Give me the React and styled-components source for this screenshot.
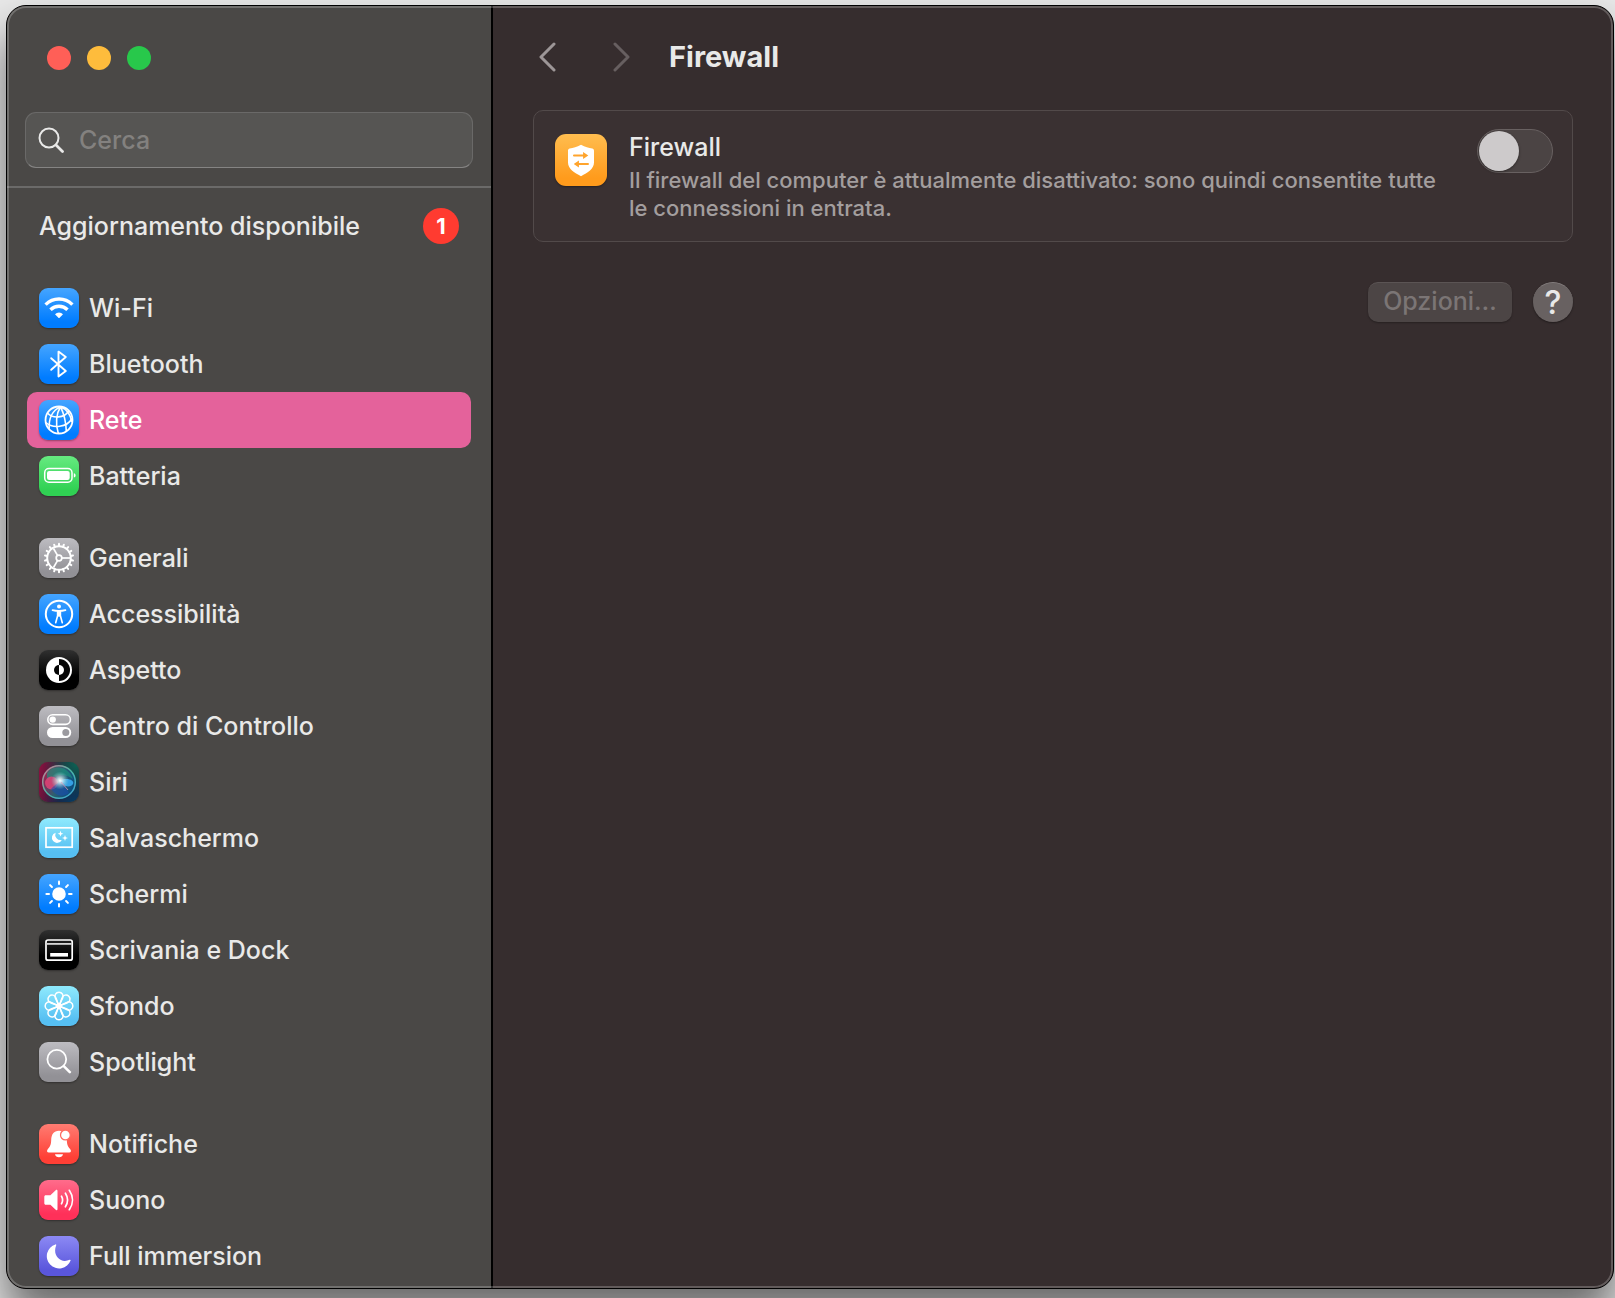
import React from "react";
import styled, { createGlobalStyle } from "styled-components";

const GlobalStyle = createGlobalStyle`
  *, *::before, *::after { box-sizing: border-box; }
  body {
    margin: 0;
    background: #e8e8e8;
    color: #e9e9e8;
    font-family: Inter, "Open Sans", sans-serif;
    font-size: 25px;
    font-weight: 500;
  }
  ul { list-style: none; margin: 0; padding: 0; }
  h1, h2, p { margin: 0; }
  button, input { font: inherit; color: inherit; }
  svg { display: block; flex: none; }
`;

const Desktop = styled.div`
  display: flex;
  min-height: 100vh;
  padding: 5px 1px 9px 6px;
  overflow: hidden;
`;

const Window = styled.div`
  position: relative;
  display: flex;
  flex: 1;
  min-width: 0;
  border: 1px solid #000;
  border-radius: 20px;
  overflow: hidden;
  background: #362d2e;
  box-shadow: 0 28px 44px rgba(0, 0, 0, 0.55);

  &::after {
    content: "";
    position: absolute;
    inset: 0;
    border-radius: 19px;
    box-shadow: inset 0 0 0 2px rgba(255, 255, 255, 0.22);
    pointer-events: none;
  }
`;

const Sidebar = styled.aside`
  flex: none;
  width: 486px;
  border-right: 2px solid #000;
  background: #4a4846;
`;

const SidebarHeader = styled.div`
  display: flex;
  flex-direction: column;
  gap: 42px;
  padding: 40px 18px 18px;
  border-bottom: 2px solid #6b6a69;
`;

const TrafficLights = styled.div`
  display: flex;
  gap: 16px;
  padding-left: 22px;
`;

const Light = styled.button`
  width: 24px;
  height: 24px;
  padding: 0;
  border: 0;
  border-radius: 50%;
  background: ${(p) => p.$color};
`;

const SearchField = styled.label`
  display: flex;
  align-items: center;
  gap: 15px;
  height: 56px;
  padding: 0 12px;
  border: 1px solid #6a6968;
  border-bottom-color: #858483;
  border-radius: 11px;
  background: #565553;
`;

const SearchInput = styled.input`
  flex: 1;
  min-width: 0;
  padding: 0;
  border: 0;
  outline: 0;
  background: transparent;
  &::placeholder { color: #83817f; opacity: 1; }
`;

const Nav = styled.nav`
  display: flex;
  flex-direction: column;
  gap: 26px;
  padding: 10px 20px 3px;
`;

const RowLink = styled.a`
  display: flex;
  align-items: center;
  gap: 10px;
  height: 56px;
  padding: 0 12px;
  border-radius: 10px;
  color: ${(p) => (p.$selected ? "#fff" : "inherit")};
  background: ${(p) => (p.$selected ? "#e4629b" : "transparent")};
  text-decoration: none;
  white-space: nowrap;
`;

const Badge = styled.span`
  display: grid;
  place-items: center;
  width: 36px;
  height: 36px;
  margin-left: auto;
  border-radius: 50%;
  background: #ff3b30;
  color: #fff;
  font-size: 22px;
  font-weight: 700;
`;

const fills = {
  blue: "linear-gradient(#45a5ff, #007cff 85%)",
  green: "linear-gradient(#66ea80, #30d153 85%)",
  gray: "linear-gradient(#bdbcc1, #929196 85%)",
  black: "linear-gradient(#303030, #000 65%)",
  cyan: "linear-gradient(#8feafd, #56bff2 85%)",
  red: "linear-gradient(#ff7c72, #ff3f35 85%)",
  pink: "linear-gradient(#ff6c8b, #ff3059 85%)",
  indigo: "linear-gradient(#8c89f4, #5a56dc 85%)",
  orange: "linear-gradient(#ffbd4f, #ff9b1c 85%)",
  siri: "radial-gradient(circle at 95% 5%, #0c6354, transparent 60%), radial-gradient(circle at 90% 100%, #063c62, transparent 60%), linear-gradient(100deg, #8d1240, #251735 60%)",
};

const Tile = styled.span`
  display: grid;
  place-items: center;
  flex: none;
  width: ${(p) => p.$size}px;
  height: ${(p) => p.$size}px;
  border-radius: ${(p) => (p.$size > 40 ? 11 : 9)}px;
  background: ${(p) => fills[p.$fill]};
  box-shadow: 0 1px 2px rgba(0, 0, 0, 0.35);
`;

const Main = styled.main`
  display: flex;
  flex-direction: column;
  flex: 1;
  min-width: 0;
  padding: 30px 40px 40px;
`;

const Toolbar = styled.header`
  display: flex;
  align-items: center;
  height: 42px;
`;

const NavButton = styled.button`
  display: grid;
  place-items: center;
  width: 30px;
  height: 42px;
  margin-right: 43px;
  padding: 0;
  border: 0;
  background: none;
  color: ${(p) => (p.disabled ? "#675f60" : "#9d9697")};

  & + & { margin-right: 33px; }
`;

const PageTitle = styled.h1`
  font-size: 29px;
  font-weight: 700;
  line-height: 42px;
`;

const Card = styled.section`
  display: flex;
  align-items: flex-start;
  gap: 22px;
  margin-top: 32px;
  padding: 18px 19px 18px 21px;
  border: 1px solid #524a4a;
  border-radius: 10px;
  background: #3a3132;
`;

const CardIcon = styled.div`
  padding-top: 5px;
`;

const CardText = styled.div`
  flex: 1;
  min-width: 0;
  padding-bottom: 1px;
`;

const CardTitle = styled.label`
  display: block;
  margin-bottom: 1px;
  line-height: 36px;
`;

const Description = styled.p`
  max-width: 830px;
  color: #a39e9e;
  font-size: 22px;
  line-height: 28px;
`;

const Switch = styled.input`
  appearance: none;
  flex: none;
  width: 76px;
  height: 44px;
  margin: 0;
  padding: 1px;
  border: 1px solid #686161;
  border-radius: 22px;
  background: #4b4444;

  &::before {
    content: "";
    display: block;
    width: 40px;
    height: 40px;
    border-radius: 50%;
    background: #cdcacb;
    box-shadow: 0 1px 3px rgba(0, 0, 0, 0.4);
  }
  &:checked { background: #e4629b; }
  &:checked::before { margin-left: 32px; }
`;

const Actions = styled.div`
  display: flex;
  justify-content: flex-end;
  gap: 21px;
  margin-top: 40px;
`;

const PushButton = styled.button`
  width: 144px;
  height: 40px;
  padding: 0 0 3px;
  border: 0;
  border-top: 1px solid #5b5454;
  border-radius: 10px;
  background: #4c4545;
  color: #7b7575;
  line-height: 36px;
  box-shadow: 0 1px 2px rgba(0, 0, 0, 0.3);
`;

const HelpButton = styled.button`
  width: 40px;
  height: 40px;
  padding: 0;
  border: 0;
  border-top: 1px solid #837d7d;
  border-radius: 50%;
  background: #686161;
  font-size: 32px;
  line-height: 38px;
  box-shadow: 0 1px 2px rgba(0, 0, 0, 0.4);
`;

const turns = (count) => Array.from({ length: count }, (_, i) => (360 / count) * i);

const glyphs = {
  wifi: (
    <>
      <g fill="none" stroke="#fff" strokeWidth="3.4">
        <path d="M6.6 16.6a19 19 0 0 1 26.8 0" />
        <path d="M11.5 21.8a12 12 0 0 1 17 0" />
      </g>
      <path d="M16 26.2a5.8 5.8 0 0 1 8 0l-3.4 3.6a.9.9 0 0 1-1.2 0z" fill="#fff" />
    </>
  ),
  bluetooth: (
    <path d="M12.2 14.2 26.8 27l-7.3 5.4V7.6l7.3 5.4-14.6 12.8" fill="none" stroke="#fff" strokeWidth="1.9" strokeLinecap="round" strokeLinejoin="round" />
  ),
  globe: (
    <g fill="none" stroke="#fff" strokeWidth="1.6">
      <circle cx="20" cy="20" r="13.5" strokeWidth="1.8" />
      <path d="M21.5 6.7C14 10 9.500 18 10.200 28.800M21.500 6.700C17.500 13 16 24 19.300 33.300M21.500 6.700C24.500 13 27 22 27.300 31M21.500 6.700C27.500 9 31.500 15 33 22" />
      <path d="M8.600 13.200C14 18.800 25 18.200 29.800 11M6.800 22.500C14 29 28 27.500 33 18.500" />
    </g>
  ),
  battery: (
    <>
      <rect x="5.7" y="12.6" width="27.3" height="13.6" rx="4.2" fill="none" stroke="#fff" strokeWidth="1.5" />
      <rect x="8" y="14.9" width="22.7" height="9" rx="2.2" fill="#fff" />
      <path d="M34.8 17.2c2.4.5 2.4 3.9 0 4.400z" fill="#fff" />
    </>
  ),
  gear: (
    <g fill="none" stroke="#fff" strokeWidth="1.7">
      <circle cx="20" cy="20" r="11.8" strokeWidth="2" />
      <circle cx="20" cy="20" r="2.8" />
      {turns(18).map((a) => (
        <path key={a} d="M20 8V5.8" strokeWidth="2" strokeLinecap="round" transform={`rotate(${a} 20 20)`} />
      ))}
      {turns(3).map((a) => (
        <path key={a} d="M23 20h8" transform={`rotate(${a} 20 20)`} />
      ))}
    </g>
  ),
  accessibility: (
    <>
      <circle cx="20" cy="20" r="13.2" fill="none" stroke="#fff" strokeWidth="2" />
      <circle cx="20" cy="12.6" r="2" fill="#fff" />
      <path d="M13.5 16.1c4 1 9 1 13 0M18.6 17v4.8l-1.900 7M21.4 17v4.8l1.900 7" fill="none" stroke="#fff" strokeWidth="1.6" strokeLinecap="round" />
      <path d="M18 16.6h4v6h-4z" fill="#fff" />
    </>
  ),
  appearance: (
    <>
      <circle cx="20" cy="20" r="13" fill="#fff" />
      <path d="M20 9a11 11 0 0 1 0 22z" fill="#050505" />
      <path d="M20 15a5 5 0 0 0 0 10z" fill="#050505" />
      <path d="M20 15a5 5 0 0 1 0 10z" fill="#fff" />
    </>
  ),
  controls: (
    <>
      <rect x="8.8" y="8.8" width="22.6" height="9.6" rx="4.8" fill="none" stroke="#fff" strokeWidth="1.6" />
      <circle cx="13.7" cy="13.6" r="3.2" fill="#fff" />
      <rect x="8" y="21" width="24.2" height="11" rx="5.5" fill="#fff" />
      <circle cx="26.8" cy="26.5" r="3.5" fill="#9c9ba0" />
    </>
  ),
  siri: (
    <>
      <defs>
        <radialGradient id="siriGlow">
          <stop offset="0" stopColor="#fff" />
          <stop offset=".3" stopColor="#e4f6f8" stopOpacity=".75" />
          <stop offset="1" stopColor="#7cc" stopOpacity="0" />
        </radialGradient>
        <linearGradient id="siriRing" x1="0" y1="0" x2="1" y2="1">
          <stop offset="0" stopColor="#d07a94" />
          <stop offset=".5" stopColor="#4bb5a2" />
          <stop offset="1" stopColor="#3ba0d8" />
        </linearGradient>
        <linearGradient id="siriCore" x1="0" y1=".3" x2="1" y2=".7">
          <stop offset="0" stopColor="#a0204f" />
          <stop offset=".5" stopColor="#2c5f70" />
          <stop offset="1" stopColor="#064b82" />
        </linearGradient>
      </defs>
      <circle cx="20" cy="20" r="16.3" fill="url(#siriCore)" stroke="url(#siriRing)" strokeWidth="1.5" />
      <path d="M8 11C13 2 29 3 34 17c-8-5-16-6-26 2z" fill="#18977f" opacity=".6" />
      <circle cx="12.5" cy="21" r="6.5" fill="#f2437a" opacity=".75" />
      <path d="M20 19c7-4 16-1 14 3s-11 3-14-3z" fill="#39a8ef" opacity=".9" />
      <path d="M12 27c4-4 7-7 10-7s6 7 8 11c-7 5-13 3-18-4z" fill="#1a4fae" opacity=".6" />
      <circle cx="21" cy="18.5" r="9" fill="url(#siriGlow)" />
      <path d="m22 20 7 8" fill="none" stroke="#f0a0b8" strokeWidth="1" opacity=".7" />
    </>
  ),
  screensaver: (
    <>
      <rect x="7" y="9.8" width="26.2" height="19.4" fill="none" stroke="#fff" strokeWidth="1.7" />
      <path d="M16.6 14.7a5.2 5.2 0 1 0 6.200 7.200 5.400 5.400 0 0 1-6.200-7.200z" fill="#fff" />
      <path d="m21.500 12.800.8 2.100 2.100.8-2.100.8-.8 2.100-.8-2.100-2.100-.8 2.100-.8zM26 17l.8 2.200 2.200.8-2.200.8L26 23l-.8-2.200L23 20l2.200-.8z" fill="#fff" />
    </>
  ),
  sun: (
    <g stroke="#fff" strokeWidth="2" strokeLinecap="round">
      <circle cx="20" cy="20" r="5.8" fill="#fff" />
      {turns(8).map((a) => (
        <path key={a} d="M20 10V7.4" transform={`rotate(${a} 20 20)`} />
      ))}
    </g>
  ),
  dock: (
    <>
      <rect x="7" y="10" width="26.2" height="20.2" rx="2" fill="none" stroke="#fff" strokeWidth="1.7" />
      <path d="M7.5 13.9h25.2" stroke="#d5d5d5" strokeWidth="1.8" />
      <path d="M11.2 23h17.8v3.6H11.2z" fill="#fff" />
    </>
  ),
  flower: (
    <g fill="none" stroke="#fff" strokeWidth="1.5">
      {turns(8).map((a) => (
        <path key={a} d="M21.500 22.500 16.400 12.200a4.100 4.100 0 1 1 7.200 0L18.500 22.500" transform={`rotate(${a} 20 20)`} />
      ))}
    </g>
  ),
  spotlight: (
    <g fill="none" stroke="#fff" strokeLinecap="round">
      <circle cx="17.8" cy="17.2" r="9.4" strokeWidth="1.8" />
      <path d="m24.8 24.200 6 6" strokeWidth="2.6" />
    </g>
  ),
  bell: (
    <>
      <path d="M20 6.800c5.200 0 7.600 3.600 7.800 9.200.2 6 1.800 7.200 3.500 9.300 1.200 1.500.8 3.200-1.200 3.200H9.900c-2 0-2.400-1.700-1.200-3.200 1.700-2.100 3.300-3.300 3.500-9.300.2-5.600 2.600-9.200 7.800-9.200zM16 30.200h8c-.4 4-7.600 4-8 0z" fill="#fff" />
      <circle cx="26.4" cy="11" r="4.9" fill="#fff" stroke="#ff6c62" strokeWidth="1.3" />
    </>
  ),
  speaker: (
    <>
      <path d="M6.800 15.200h4.600l5.300-5c.8-.8 1.800-.4 1.800.8v18c0 1.200-1 1.600-1.800.8l-5.300-5H6.800c-1 0-1.500-.6-1.500-1.500v-6.600c0-.9.500-1.500 1.500-1.500z" fill="#fff" />
      <path d="M22.500 16.200c1.400 2.400 1.400 5.200 0 7.600M26.400 13.200c2.700 4.200 2.700 9.400 0 13.600M30.300 10.300c4.200 6 4.200 13.400 0 19.400" fill="none" stroke="#fff" strokeWidth="1.7" strokeLinecap="round" />
    </>
  ),
  moon: (
    <path d="M16.400 8.400A12.300 12.300 0 1 0 31.600 24.500c.2-.7-.4-1-.9-.7-9.400 4.200-17.600-4.500-13.500-14.500.3-.7-.2-1.100-.8-.9z" fill="#fff" />
  ),
  shield: (
    <>
      <path d="M20 8.200c3.200 1.700 6 2.500 8.700 3 .8.200 1.300.8 1.300 1.700v9c0 5-4.800 7.700-10 10.600-5.200-2.900-10-5.600-10-10.600v-9c0-.9.500-1.500 1.300-1.700 2.700-.5 5.500-1.300 8.700-3z" fill="#fff" />
      <path d="M14.600 16.500h8M25.400 23.100h-8" stroke="#ffa42c" strokeWidth="1.500" strokeLinecap="round" />
      <path d="m21.600 13.800 4 2.700-4 2.700zM18.400 20.400l-4 2.700 4 2.700z" fill="#ffa42c" />
    </>
  ),
};

function AppIcon({ fill, glyph, size = 40 }) {
  return (
    <Tile $fill={fill} $size={size}>
      <svg width={size} height={size} viewBox="0 0 40 40" aria-hidden="true">
        {glyphs[glyph]}
      </svg>
    </Tile>
  );
}

const groups = [
  [
    ["Wi-Fi", "blue", "wifi"],
    ["Bluetooth", "blue", "bluetooth"],
    ["Rete", "blue", "globe"],
    ["Batteria", "green", "battery"],
  ],
  [
    ["Generali", "gray", "gear"],
    ["Accessibilità", "blue", "accessibility"],
    ["Aspetto", "black", "appearance"],
    ["Centro di Controllo", "gray", "controls"],
    ["Siri", "siri", "siri"],
    ["Salvaschermo", "cyan", "screensaver"],
    ["Schermi", "blue", "sun"],
    ["Scrivania e Dock", "black", "dock"],
    ["Sfondo", "cyan", "flower"],
    ["Spotlight", "gray", "spotlight"],
  ],
  [
    ["Notifiche", "red", "bell"],
    ["Suono", "pink", "speaker"],
    ["Full immersion", "indigo", "moon"],
  ],
];

function Chevron({ d }) {
  return (
    <svg width="20" height="30" viewBox="0 0 20 30" fill="none" stroke="currentColor" strokeWidth="3" strokeLinecap="round" strokeLinejoin="round" aria-hidden="true">
      <path d={d} />
    </svg>
  );
}

export default function App() {
  return (
    <>
      <GlobalStyle />
      <Desktop>
        <Window>
          <Sidebar>
            <SidebarHeader>
              <TrafficLights>
                <Light type="button" $color="#ff5f57" aria-label="Chiudi" />
                <Light type="button" $color="#febc3c" aria-label="Riduci" />
                <Light type="button" $color="#28c84b" aria-label="Ingrandisci" />
              </TrafficLights>
              <SearchField>
                <svg width="26" height="26" viewBox="0 0 26 26" fill="none" stroke="#e9e9e8" strokeLinecap="round" aria-hidden="true">
                  <circle cx="11" cy="11" r="9.500" strokeWidth="2" />
                  <path d="m18 18 6.500 6.500" strokeWidth="2.800" />
                </svg>
                <SearchInput type="text" placeholder="Cerca" aria-label="Cerca" />
              </SearchField>
            </SidebarHeader>
            <Nav>
              <RowLink href="#aggiornamento">
                Aggiornamento disponibile
                <Badge>1</Badge>
              </RowLink>
              {groups.map((items) => (
                <ul key={items[0][0]}>
                  {items.map(([name, fill, glyph]) => (
                    <li key={name}>
                      <RowLink
                        href={`#${glyph}`}
                        $selected={name === "Rete"}
                        aria-current={name === "Rete" ? "page" : undefined}
                      >
                        <AppIcon fill={fill} glyph={glyph} />
                        {name}
                      </RowLink>
                    </li>
                  ))}
                </ul>
              ))}
            </Nav>
          </Sidebar>
          <Main>
            <Toolbar>
              <NavButton type="button" aria-label="Indietro">
                <Chevron d="M16 2 3 15l13 13" />
              </NavButton>
              <NavButton type="button" aria-label="Avanti" disabled>
                <Chevron d="m4 2 13 13L4 28" />
              </NavButton>
              <PageTitle>Firewall</PageTitle>
            </Toolbar>
            <Card>
              <CardIcon>
                <AppIcon fill="orange" glyph="shield" size={52} />
              </CardIcon>
              <CardText>
                <CardTitle htmlFor="firewall">Firewall</CardTitle>
                <Description>
                  Il firewall del computer è attualmente disattivato: sono quindi consentite tutte le connessioni in entrata.
                </Description>
              </CardText>
              <Switch id="firewall" type="checkbox" role="switch" />
            </Card>
            <Actions>
              <PushButton type="button" disabled>Opzioni…</PushButton>
              <HelpButton type="button" aria-label="Aiuto">?</HelpButton>
            </Actions>
          </Main>
        </Window>
      </Desktop>
    </>
  );
}
